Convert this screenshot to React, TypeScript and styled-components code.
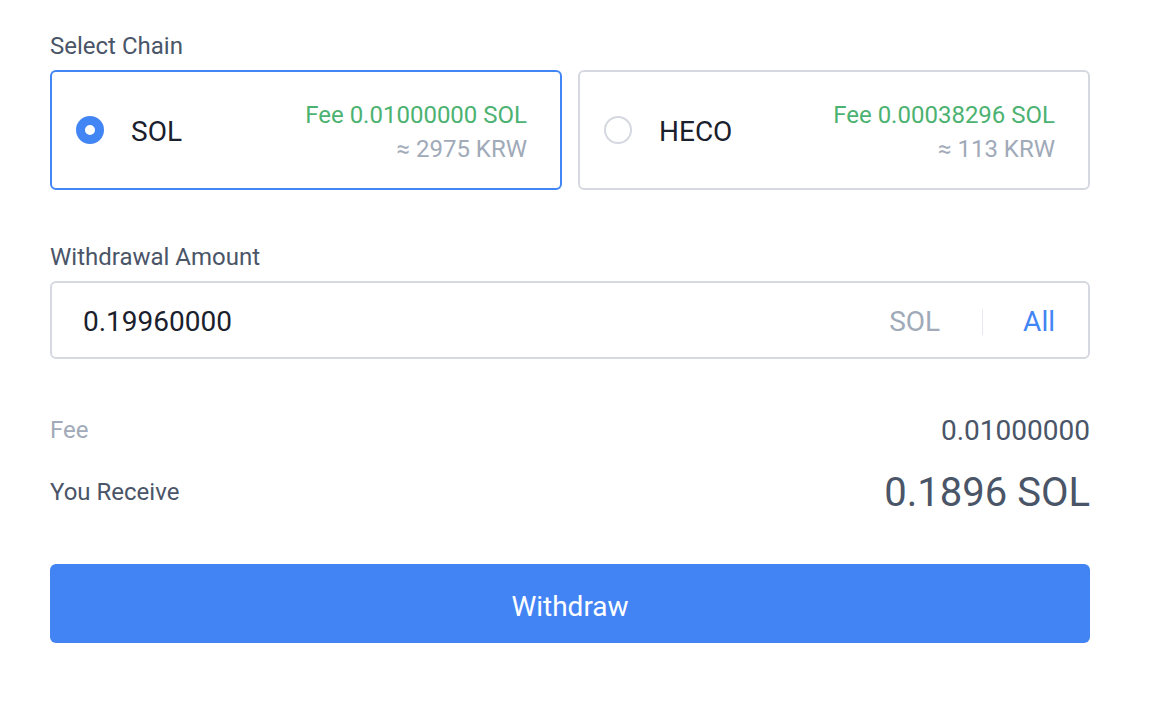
import React, { useState } from 'react';
import styled, { createGlobalStyle } from 'styled-components';

const GlobalStyle = createGlobalStyle`
  html, body {
    margin: 0;
    padding: 0;
    background: #ffffff;
    font-family: Roboto, 'Liberation Sans', sans-serif;
  }
`;

const Page = styled.div`
  width: 1040px;
  padding: 32px 50px 0;
  display: flex;
  flex-direction: column;
`;

const Label = styled.div`
  font-size: 24px;
  line-height: 28px;
  color: #4a5568;
  margin-bottom: 10px;
`;

const ChainGrid = styled.div`
  display: grid;
  grid-template-columns: 1fr 1fr;
  gap: 16px;
  margin-bottom: 53px;
`;

const ChainCard = styled.div<{ $active?: boolean }>`
  box-sizing: border-box;
  height: 120px;
  border: ${(p) => (p.$active ? '2px solid #4285f4' : '2px solid #d5d9df')};
  border-radius: 6px;
  display: flex;
  align-items: center;
  padding: 0 33px 0 24px;
  cursor: pointer;
`;

const Radio = styled.span<{ $active?: boolean }>`
  box-sizing: border-box;
  width: 28px;
  height: 28px;
  border-radius: 50%;
  flex-shrink: 0;
  background: #ffffff;
  border: ${(p) => (p.$active ? '9px solid #4285f4' : '2px solid #d5d9df')};
`;

const ChainName = styled.span`
  margin-left: 27px;
  padding-top: 2px;
  font-size: 28px;
  color: #1a202c;
  flex: 1;
`;

const FeeBox = styled.div`
  display: flex;
  flex-direction: column;
  align-items: flex-end;
  gap: 6px;
  padding-top: 3px;
`;

const FeeText = styled.span`
  font-size: 24px;
  line-height: 28px;
  color: #4cb271;
`;

const KrwText = styled.span`
  font-size: 24px;
  line-height: 28px;
  color: #a0aab8;
`;

const AmountBox = styled.div`
  box-sizing: border-box;
  height: 78px;
  border: 2px solid #d5d9df;
  border-radius: 6px;
  display: flex;
  align-items: center;
  padding: 3px 33px 0 31px;
  margin-bottom: 55px;
`;

const AmountInput = styled.input`
  flex: 1;
  border: none;
  outline: none;
  font-family: inherit;
  font-size: 28px;
  color: #1a202c;
  background: transparent;
  padding: 0;
`;

const Unit = styled.span`
  font-size: 28px;
  color: #a0aab8;
`;

const Divider = styled.span`
  width: 1px;
  height: 26px;
  background: #e6eaef;
  margin: 0 40px 0 42px;
`;

const AllButton = styled.button`
  border: none;
  background: none;
  padding: 0;
  font-family: inherit;
  font-size: 28px;
  color: #4285f4;
  cursor: pointer;
`;

const SummaryRow = styled.div<{ $big?: boolean }>`
  display: flex;
  justify-content: space-between;
  align-items: center;
  height: ${(p) => (p.$big ? '52px' : '32px')};
  margin-bottom: ${(p) => (p.$big ? '46px' : '20px')};
`;

const RowLabel = styled.span<{ $muted?: boolean }>`
  font-size: 24px;
  color: ${(p) => (p.$muted ? '#a0aab8' : '#4a5568')};
`;

const RowValue = styled.span<{ $big?: boolean }>`
  font-size: ${(p) => (p.$big ? '40px' : '28px')};
  color: #4a5568;
`;

const SubmitButton = styled.button`
  height: 79px;
  border: none;
  border-radius: 6px;
  background: #4384f5;
  color: #ffffff;
  font-family: inherit;
  font-size: 28px;
  padding: 5px 0 0;
  cursor: pointer;
`;

const chains = [
  { name: 'SOL', fee: '0.01000000 SOL', krw: '2975 KRW' },
  { name: 'HECO', fee: '0.00038296 SOL', krw: '113 KRW' },
];

export default function App() {
  const [selected, setSelected] = useState('SOL');
  const [amount, setAmount] = useState('0.19960000');

  return (
    <Page>
      <GlobalStyle />
      <Label>Select Chain</Label>
      <ChainGrid>
        {chains.map((c) => (
          <ChainCard key={c.name} $active={selected === c.name} onClick={() => setSelected(c.name)}>
            <Radio $active={selected === c.name} />
            <ChainName>{c.name}</ChainName>
            <FeeBox>
              <FeeText>Fee {c.fee}</FeeText>
              <KrwText>≈ {c.krw}</KrwText>
            </FeeBox>
          </ChainCard>
        ))}
      </ChainGrid>

      <Label>Withdrawal Amount</Label>
      <AmountBox>
        <AmountInput value={amount} onChange={(e) => setAmount(e.target.value)} />
        <Unit>SOL</Unit>
        <Divider />
        <AllButton>All</AllButton>
      </AmountBox>

      <SummaryRow>
        <RowLabel $muted>Fee</RowLabel>
        <RowValue>0.01000000</RowValue>
      </SummaryRow>
      <SummaryRow $big>
        <RowLabel>You Receive</RowLabel>
        <RowValue $big>0.1896 SOL</RowValue>
      </SummaryRow>

      <SubmitButton>Withdraw</SubmitButton>
    </Page>
  );
}
